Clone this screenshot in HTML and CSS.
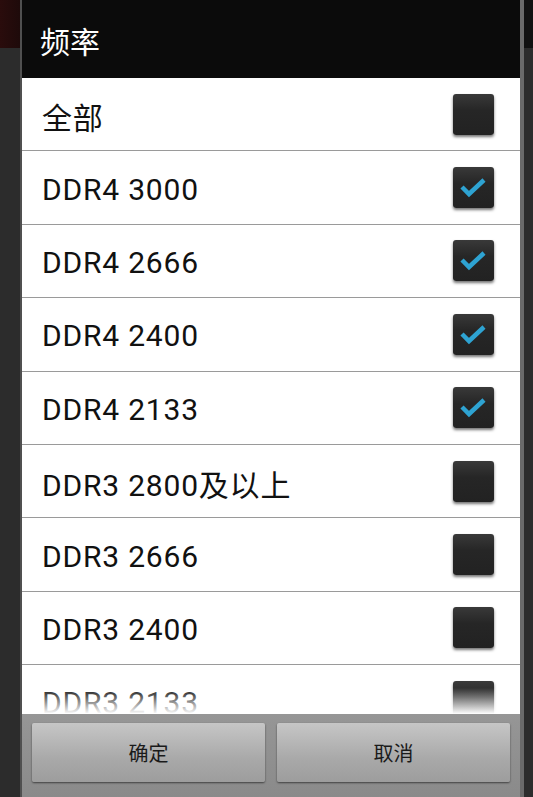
FILE: index.html
```html
<!DOCTYPE html>
<html lang="zh-CN">
<head>
    <meta charset="UTF-8">
    <meta name="viewport" content="width=device-width, initial-scale=1.0">
    <title>频率</title>
    <link rel="stylesheet" href="styles.css">
</head>
<body>
    <div class="page">
        <div class="page-header"></div>
    </div>

    <div class="dialog">
        <div class="dialog-title">频率</div>

        <div class="option-list">
            <div class="option">
                <span class="option-label">全部</span>
                <span class="checkbox"></span>
            </div>
            <div class="option">
                <span class="option-label">DDR4 3000</span>
                <span class="checkbox checked">
                    <svg viewBox="0 0 41 41"><polyline points="9,20 16,27 31,13"/></svg>
                </span>
            </div>
            <div class="option">
                <span class="option-label">DDR4 2666</span>
                <span class="checkbox checked">
                    <svg viewBox="0 0 41 41"><polyline points="9,20 16,27 31,13"/></svg>
                </span>
            </div>
            <div class="option">
                <span class="option-label">DDR4 2400</span>
                <span class="checkbox checked">
                    <svg viewBox="0 0 41 41"><polyline points="9,20 16,27 31,13"/></svg>
                </span>
            </div>
            <div class="option">
                <span class="option-label">DDR4 2133</span>
                <span class="checkbox checked">
                    <svg viewBox="0 0 41 41"><polyline points="9,20 16,27 31,13"/></svg>
                </span>
            </div>
            <div class="option">
                <span class="option-label">DDR3 2800及以上</span>
                <span class="checkbox"></span>
            </div>
            <div class="option">
                <span class="option-label">DDR3 2666</span>
                <span class="checkbox"></span>
            </div>
            <div class="option">
                <span class="option-label">DDR3 2400</span>
                <span class="checkbox"></span>
            </div>
            <div class="option">
                <span class="option-label">DDR3 2133</span>
                <span class="checkbox"></span>
            </div>
        </div>

        <div class="dialog-buttons">
            <button class="btn">确定</button>
            <button class="btn">取消</button>
        </div>
    </div>
</body>
</html>
```

FILE: styles.css
```css
* {
    margin: 0;
    padding: 0;
    box-sizing: border-box;
}

body {
    font-family: Roboto, 'Noto Sans CJK SC', sans-serif;
    background-color: #2c2c2c;
    height: 797px;
    overflow: hidden;
}

.page-header {
    height: 48px;
    background: linear-gradient(90deg, #2a0c0c 0, #1e0a0a 20px, #111 40px);
}

/* dialog sits over the dimmed page */
.dialog {
    position: absolute;
    top: 0;
    left: 20px;
    width: 504px;
    height: 797px;
    display: flex;
    flex-direction: column;
    border-left: 2px solid #505050;
    border-right: 4px solid #6a6a6a;
    background: #8e8e8e;
}

.dialog-title {
    height: 78px;
    flex-shrink: 0;
    background: #0b0b0b;
    color: #fff;
    font-size: 30px;
    line-height: 78px;
    padding: 4px 0 0 18px;
}

.option-list {
    position: relative;
    height: 636px;
    flex-shrink: 0;
    background: #fff;
    overflow: hidden;
}

.option-list::after {
    content: '';
    position: absolute;
    left: 0;
    right: 0;
    bottom: 0;
    height: 26px;
    background: linear-gradient(rgba(255,255,255,0), #fff);
}

.option {
    height: 73.4px;
    flex-shrink: 0;
    display: flex;
    align-items: center;
    justify-content: space-between;
    padding: 0 26px 0 20px;
    border-bottom: 1px solid #9a9a9a;
}

.option-label {
    font-size: 30px;
    color: #111;
    letter-spacing: 0.8px;
    padding-top: 3px;
}

.checkbox {
    width: 41px;
    height: 41px;
    border-radius: 3px;
    background: linear-gradient(#393939, #262626 40%, #222);
    box-shadow: 0 2px 3px rgba(0,0,0,0.55);
    display: flex;
}

.checkbox svg {
    width: 41px;
    height: 41px;
}

.checkbox polyline {
    fill: none;
    stroke: #2ea3d2;
    stroke-width: 4.5;
}

.dialog-buttons {
    flex: 1;
    display: flex;
    gap: 12px;
    padding: 9px 10px 0 10px;
    background: linear-gradient(#969696, #8a8a8a);
}

.btn {
    flex: 1;
    height: 59px;
    border: none;
    border-radius: 2px;
    background: linear-gradient(#c6c6c6, #a9a9a9 60%, #9d9d9d);
    box-shadow: 0 1px 2px rgba(0,0,0,0.55);
    font-family: Roboto, 'Noto Sans CJK SC', sans-serif;
    font-size: 20px;
    color: #1a1a1a;
}
```
